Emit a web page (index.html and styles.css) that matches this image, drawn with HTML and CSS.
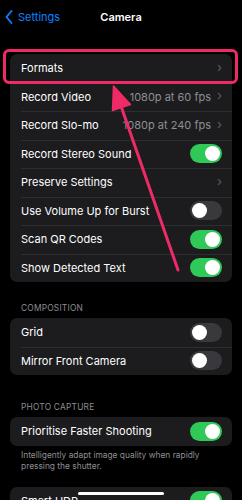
FILE: index.html
```html
<!DOCTYPE html>
<html lang="en">
<head>
    <meta charset="UTF-8">
    <title>Camera</title>
    <link rel="stylesheet" href="styles.css">
</head>
<body>
<div class="screen">
    <div class="nav">
        <div class="back">
            <svg class="back-icon" width="8" height="14" viewBox="0 0 8 14">
                <path d="M6.5 1 L1.5 7 L6.5 13" fill="none" stroke="#0a84ff" stroke-width="1.8" stroke-linecap="round" stroke-linejoin="round"/>
            </svg>
            <span>Settings</span>
        </div>
        <div class="title">Camera</div>
    </div>

    <div class="group first-group">
        <div class="row"><span class="label">Formats</span><span class="chevron">&#8250;</span></div>
        <div class="row"><span class="label">Record Video</span><span class="value">1080p at 60 fps</span><span class="chevron">&#8250;</span></div>
        <div class="row"><span class="label">Record Slo-mo</span><span class="value">1080p at 240 fps</span><span class="chevron">&#8250;</span></div>
        <div class="row"><span class="label">Record Stereo Sound</span><span class="switch on"></span></div>
        <div class="row"><span class="label">Preserve Settings</span><span class="chevron">&#8250;</span></div>
        <div class="row"><span class="label">Use Volume Up for Burst</span><span class="switch"></span></div>
        <div class="row"><span class="label">Scan QR Codes</span><span class="switch on"></span></div>
        <div class="row"><span class="label">Show Detected Text</span><span class="switch on"></span></div>
    </div>

    <div class="section-title first-title">COMPOSITION</div>
    <div class="group">
        <div class="row"><span class="label">Grid</span><span class="switch"></span></div>
        <div class="row"><span class="label">Mirror Front Camera</span><span class="switch"></span></div>
    </div>

    <div class="section-title">PHOTO CAPTURE</div>
    <div class="group">
        <div class="row"><span class="label">Prioritise Faster Shooting</span><span class="switch on"></span></div>
    </div>
    <div class="section-footer">Intelligently adapt image quality when rapidly pressing the shutter.</div>

    <div class="group">
        <div class="row"><span class="label">Smart HDR</span><span class="switch on"></span></div>
    </div>

    <!-- annotation drawn over the screenshot -->
    <div class="highlight"></div>
    <svg class="arrow" width="242" height="500" viewBox="0 0 242 500">
        <line x1="178" y1="270" x2="121" y2="106" stroke="#ee2a67" stroke-width="3" stroke-linecap="round"/>
        <polygon points="113.5,86 130.5,104.5 112.5,110.5" fill="#ee2a67" stroke="#ee2a67" stroke-width="1.5" stroke-linejoin="round"/>
    </svg>
    <div class="home-indicator"></div>
</div>
</body>
</html>
```

FILE: styles.css
```css
body {
    margin: 0;
    background-color: #000;
    font-family: Inter, "Noto Sans", sans-serif;
    color: #fff;
}

.screen {
    position: relative;
    width: 242px;
    height: 500px;
    overflow: hidden;
}

.nav {
    position: relative;
    height: 34px;
    display: flex;
    align-items: center;
    justify-content: center;
}

.back {
    position: absolute;
    left: 5px;
    top: 0;
    height: 34px;
    display: flex;
    align-items: center;
    gap: 5px;
    color: #0a84ff;
    font-size: 11px;
}

.title {
    font-size: 11px;
    font-weight: 600;
}

.group {
    margin: 0 10px;
    background-color: #1c1c1e;
    border-radius: 7px;
    overflow: hidden;
}

.first-group {
    margin-top: 20px;
}

.row {
    position: relative;
    height: 28.5px;
    display: flex;
    align-items: center;
    padding: 0 10px 0 11px;
    font-size: 11px;
}

.row + .row::before {
    content: "";
    position: absolute;
    left: 11px;
    right: 0;
    top: 0;
    border-top: 1px solid #2e2e31;
}

.label {
    flex: 1;
    white-space: nowrap;
}

.value {
    color: #8e8e93;
    margin-right: 6px;
    white-space: nowrap;
}

.chevron {
    color: #5c5c61;
    font-size: 13px;
    line-height: 1;
    margin-top: -2px;
}

.switch {
    position: relative;
    width: 32px;
    height: 19px;
    border-radius: 10px;
    background-color: #39393d;
    flex-shrink: 0;
}

.switch::after {
    content: "";
    position: absolute;
    left: 2px;
    top: 2px;
    width: 15px;
    height: 15px;
    border-radius: 50%;
    background-color: #fff;
}

.switch.on {
    background-color: #30c958;
}

.switch.on::after {
    left: 15px;
}

.section-title {
    padding: 27px 21px 5px;
    font-size: 8.4px;
    line-height: 10px;
    color: #8e8e93;
    letter-spacing: 0.2px;
}

.section-title.first-title {
    padding-top: 21px;
}

.section-footer {
    padding: 4px 21px 15px;
    font-size: 8.4px;
    line-height: 11px;
    color: #8e8e93;
}

.highlight {
    position: absolute;
    left: 3px;
    top: 49px;
    width: 235px;
    height: 35px;
    box-sizing: border-box;
    border: 3px solid #ee2a67;
    border-radius: 6px;
}

.arrow {
    position: absolute;
    left: 0;
    top: 0;
    pointer-events: none;
}

.home-indicator {
    position: absolute;
    left: 78px;
    top: 492px;
    width: 86px;
    height: 3px;
    border-radius: 2px;
    background-color: #fff;
}
```
